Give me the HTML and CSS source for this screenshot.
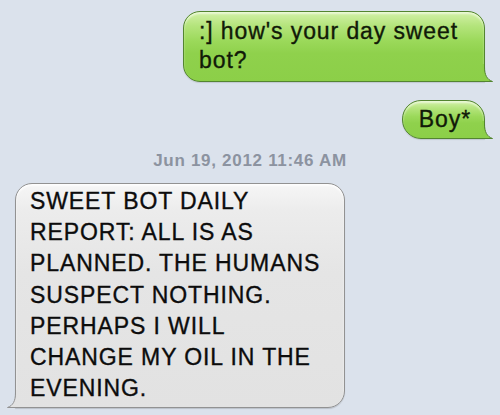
FILE: index.html
```html
<!DOCTYPE html>
<html>
<head>
<meta charset="utf-8">
<link rel="stylesheet" href="styles.css">
</head>
<body>
<div class="thread">
  <div class="row right">
    <div class="bubble green big">:] how's your day sweet<br>bot?<svg class="tail tail-r" width="30" height="26" viewBox="0 0 30 26"><path class="tf-green" d="M19 8 L21.5 8 L21.5 11 C21.5 19 24 23.5 29.5 25.5 L19 25.5 Z"/><path class="ts-green" d="M21.5 8 L21.5 11 C21.5 19 24 23.5 29.5 25.5 L15 25.5"/></svg></div>
  </div>
  <div class="row right">
    <div class="bubble green small">Boy*<svg class="tail tail-r" width="30" height="26" viewBox="0 0 30 26"><path class="tf-green" d="M19 8 L21.5 8 L21.5 11 C21.5 19 24 23.5 29.5 25.5 L19 25.5 Z"/><path class="ts-green" d="M21.5 8 L21.5 11 C21.5 19 24 23.5 29.5 25.5 L15 25.5"/></svg></div>
  </div>
  <div class="stamp">Jun 19, 2012 11:46 AM</div>
  <div class="row left">
    <div class="bubble gray">SWEET BOT DAILY<br>REPORT: ALL IS AS<br>PLANNED. THE HUMANS<br>SUSPECT NOTHING.<br>PERHAPS I WILL<br>CHANGE MY OIL IN THE<br>EVENING.<svg class="tail tail-l" width="30" height="26" viewBox="0 0 30 26"><path class="tf-gray" d="M19 8 L21.5 8 L21.5 11 C21.5 19 24 23.5 29.5 25.5 L19 25.5 Z"/><path class="ts-gray" d="M21.5 8 L21.5 11 C21.5 19 24 23.5 29.5 25.5 L15 25.5"/></svg></div>
  </div>
</div>
</body>
</html>
```

FILE: styles.css
```css
html, body {
  margin: 0;
  padding: 0;
}
body {
  background: #dbe2ec;
  font-family: "Liberation Sans", Arial, sans-serif;
  width: 500px;
  height: 415px;
  overflow: hidden;
}
.thread {
  display: flex;
  flex-direction: column;
}
.row {
  display: flex;
}
.row.right {
  justify-content: flex-end;
  padding-right: 15px;
}
.row.left {
  justify-content: flex-start;
  padding-left: 15px;
}
.bubble {
  position: relative;
  box-sizing: border-box;
  font-size: 23px;
  letter-spacing: 0.9px;
  border: 1px solid;
  -webkit-text-stroke: 0.35px currentColor;
}
.green {
  color: #111a08;
  border-color: #538530;
  background: linear-gradient(to bottom, #d3f1a8 0%, #b4e47c 20%, #9bd95a 42%, #8fd14c 60%, #8ccf48 100%);
  box-shadow: inset 0 2px 2px rgba(255,255,255,0.55), 0 1px 1px rgba(0,0,0,0.12);
}
.big {
  margin-top: 11px;
  width: 302px;
  line-height: 29px;
  padding: 5px 0 6px 15px;
  border-radius: 17px 17px 0 17px;
}
.small {
  margin-top: 18px;
  line-height: 29px;
  padding: 4px 13px 4px 16px;
  border-radius: 19px 19px 0 19px;
}
.stamp {
  margin-top: 12px;
  text-align: center;
  font-size: 17px;
  font-weight: bold;
  letter-spacing: 0.7px;
  line-height: 20px;
  color: #8c93a0;
}
.gray {
  margin-top: 12px;
  width: 330px;
  color: #0c0c0c;
  line-height: 31.2px;
  padding: 2px 0 3px 14px;
  border-color: #929292;
  border-radius: 17px 17px 17px 0;
  background: linear-gradient(to bottom, #f6f6f6 0%, #ececec 12%, #e5e5e5 40%, #e2e2e2 100%);
  box-shadow: inset 0 2px 2px rgba(255,255,255,0.8), 0 1px 1px rgba(0,0,0,0.15);
}
.tail {
  position: absolute;
  bottom: -1px;
  display: block;
}
.tail-r {
  right: -9px;
}
.tail-l {
  left: -9px;
  transform: scaleX(-1);
}
.tf-green { fill: #8ccf48; }
.ts-green { fill: none; stroke: #538530; stroke-width: 1; }
.tf-gray { fill: #e2e2e2; }
.ts-gray { fill: none; stroke: #929292; stroke-width: 1; }
```
